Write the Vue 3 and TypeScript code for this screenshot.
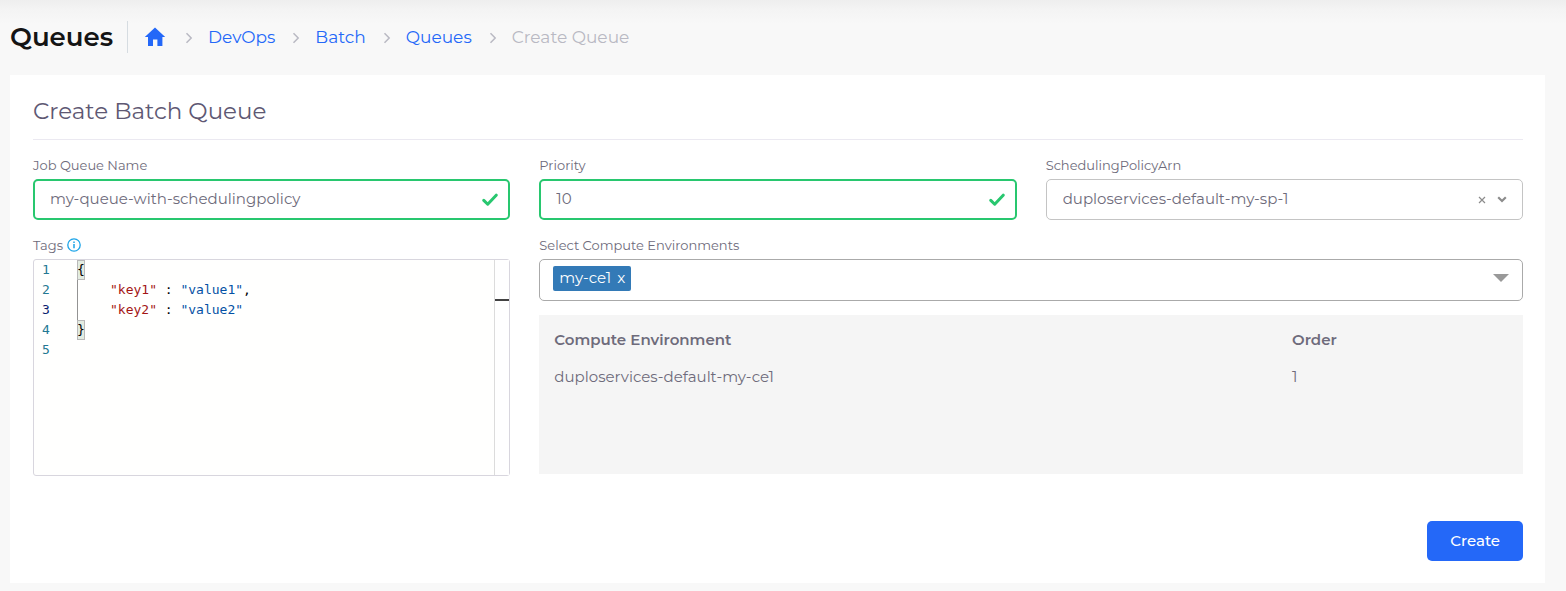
<script setup lang="ts">
import { computed, ref } from 'vue'

interface Crumb {
  label: string
  current?: boolean
}
interface Token {
  text: string
  kind: string
}
interface Environment {
  short: string
  name: string
}

const crumbs: Crumb[] = [
  { label: 'DevOps' },
  { label: 'Batch' },
  { label: 'Queues' },
  { label: 'Create Queue', current: true },
]

const queueName = ref('my-queue-with-schedulingpolicy')
const priority = ref('10')
const policy = ref('duploservices-default-my-sp-1')
const search = ref('')
const environments = ref<Environment[]>([{ short: 'my-ce1', name: 'duploservices-default-my-ce1' }])
const rows = computed(() => environments.value.map((env, i) => ({ name: env.name, order: i + 1 })))

const lines: Token[][] = [
  [{ text: '{', kind: 'brace' }],
  [
    { text: '"key1"', kind: 'key' },
    { text: ' : ', kind: 'plain' },
    { text: '"value1"', kind: 'value' },
    { text: ',', kind: 'plain' },
  ],
  [
    { text: '"key2"', kind: 'key' },
    { text: ' : ', kind: 'plain' },
    { text: '"value2"', kind: 'value' },
  ],
  [{ text: '}', kind: 'brace' }],
  [],
]
const activeLine = 3

function removeEnvironment(index: number) {
  environments.value.splice(index, 1)
}
</script>

<template>
  <div class="page">
    <header class="topbar">
      <h1>Queues</h1>
      <nav class="crumbs" aria-label="Breadcrumb">
        <a class="home" href="#" aria-label="Home">
          <svg width="22" height="20" viewBox="0 0 22 20"><path d="M11 0.500 21.200 10H18.400v9h-5v-6.500H9v6.500H4V10H0.800z" fill="currentColor" /></svg>
        </a>
        <template v-for="crumb in crumbs" :key="crumb.label">
          <svg class="sep" width="8" height="12" viewBox="0 0 8 12"><path d="M1.500 1.200 6.200 6 1.500 10.800" fill="none" stroke="currentColor" stroke-width="1.500" /></svg>
          <span v-if="crumb.current" class="current" aria-current="page">{{ crumb.label }}</span>
          <a v-else href="#">{{ crumb.label }}</a>
        </template>
      </nav>
    </header>

    <main class="card">
      <h2>Create Batch Queue</h2>
      <form class="form" @submit.prevent>
        <div class="field">
          <label for="queue-name">Job Queue Name</label>
          <div class="box valid">
            <input id="queue-name" v-model="queueName" type="text" />
            <svg class="check" width="16" height="14" viewBox="0 0 16 14"><path d="M1.800 7.400 5.700 11.200 14.200 2.200" fill="none" stroke="currentColor" stroke-width="3" stroke-linecap="round" stroke-linejoin="round" /></svg>
          </div>
        </div>

        <div class="field">
          <label for="priority">Priority</label>
          <div class="box valid">
            <input id="priority" v-model="priority" type="text" inputmode="numeric" />
            <svg class="check" width="16" height="14" viewBox="0 0 16 14"><path d="M1.800 7.400 5.700 11.200 14.200 2.200" fill="none" stroke="currentColor" stroke-width="3" stroke-linecap="round" stroke-linejoin="round" /></svg>
          </div>
        </div>

        <div class="field">
          <label for="policy">SchedulingPolicyArn</label>
          <div class="box select">
            <select id="policy" v-model="policy">
              <option>duploservices-default-my-sp-1</option>
            </select>
            <button class="clear" type="button" aria-label="Clear policy" @click="policy = ''">
              <svg width="8" height="8" viewBox="0 0 8 8"><path d="M1 1l6 6M7 1 1 7" stroke="currentColor" stroke-width="1.200" /></svg>
            </button>
            <svg class="chevron" width="10" height="7" viewBox="0 0 10 7"><path d="M1.200 1.200 5 5 8.800 1.200" fill="none" stroke="currentColor" stroke-width="2.200" /></svg>
          </div>
        </div>

        <div class="field">
          <span id="tags-label" class="label">
            Tags
            <svg width="14" height="14" viewBox="0 0 14 14"><circle cx="7" cy="7" r="6.200" fill="none" stroke="currentColor" stroke-width="1.300" /><path d="M7 6v4.300M7 3.400v1.500" stroke="currentColor" stroke-width="1.500" /></svg>
          </span>
          <div class="editor">
            <div class="gutter" aria-hidden="true">
              <span v-for="(_, i) in lines" :key="i" :class="{ active: i + 1 === activeLine }">{{ i + 1 }}</span>
            </div>
            <div class="code" contenteditable="true" spellcheck="false" role="textbox" aria-multiline="true" aria-labelledby="tags-label">
              <div v-for="(line, i) in lines" :key="i" class="line" :class="{ nested: line.length > 1 }"><span v-for="(token, j) in line" :key="j" :class="token.kind">{{ token.text }}</span></div>
            </div>
            <div class="ruler"><div class="cursor-mark"></div></div>
          </div>
        </div>

        <div class="field wide">
          <label for="environments">Select Compute Environments</label>
          <div class="box multi">
            <span v-for="(env, i) in environments" :key="env.name" class="chip">
              {{ env.short }}
              <button type="button" :aria-label="`Remove ${env.short}`" @click="removeEnvironment(i)">x</button>
            </span>
            <input id="environments" v-model="search" type="text" role="combobox" aria-expanded="false" />
            <svg class="arrow" width="16" height="8" viewBox="0 0 16 8"><path d="M0 0h16L8 8z" fill="currentColor" /></svg>
          </div>
          <div class="panel">
            <table>
              <thead>
                <tr><th scope="col">Compute Environment</th><th scope="col" class="order">Order</th></tr>
              </thead>
              <tbody>
                <tr v-for="row in rows" :key="row.name"><td>{{ row.name }}</td><td>{{ row.order }}</td></tr>
              </tbody>
            </table>
          </div>
        </div>

        <div class="actions">
          <button class="create" type="submit">Create</button>
        </div>
      </form>
    </main>
  </div>
</template>

<style>
body {
  margin: 0;
  background: #f8f8f8;
}
</style>

<style scoped>
.page {
  box-sizing: border-box;
  min-height: 100vh;
  padding: 0 21px 8px 10px;
  background: linear-gradient(#eee, #f4f4f4 10px, #f8f8f8 24px);
  color: #6e6b7b;
  font-family: Montserrat, Inter, sans-serif;
  font-size: 15px;
  line-height: 24px;
}
.topbar {
  display: flex;
  align-items: center;
  box-sizing: border-box;
  height: 75px;
  padding-bottom: 2px;
}
h1 {
  margin: 0;
  padding-right: 14px;
  border-right: 1px solid #d6dce1;
  color: #141414;
  font-size: 26px;
  font-weight: 600;
  line-height: 32px;
}
.crumbs {
  display: flex;
  align-items: center;
  padding-left: 16px;
  font-size: 17px;
}
.crumbs a {
  color: #2468f8;
  text-decoration: none;
}
.crumbs .home {
  display: flex;
  margin-right: 2px;
}
.sep {
  margin: 2px 15px 0 17px;
  color: #b9b9c3;
}
.current {
  color: #b9b9c3;
}
.card {
  padding: 20px 22px 22px 23px;
  background: #fff;
}
h2 {
  margin: 0;
  padding-bottom: 12px;
  border-bottom: 1px solid #ebe9f1;
  color: #5e5873;
  font-size: 23px;
  font-weight: 400;
  line-height: 32px;
}
.form {
  display: grid;
  grid-template-columns: repeat(3, minmax(0, 1fr));
  gap: 15px 29px;
  padding-top: 15px;
}
.wide {
  grid-column: span 2;
}
.field label,
.label {
  display: flex;
  align-items: center;
  gap: 4px;
  padding-bottom: 4px;
  font-size: 13px;
  line-height: 20px;
}
.label svg {
  color: #1ca4e8;
}
.box {
  display: flex;
  align-items: center;
  box-sizing: border-box;
  height: 41px;
  border: 1px solid #c4c4c4;
  border-radius: 5px;
  background: #fff;
}
.box.valid {
  border: 2px solid #28c76f;
}
.box input,
.box select {
  flex: 1;
  min-width: 0;
  height: 100%;
  box-sizing: border-box;
  padding: 0 15px 2px;
  border: 0;
  outline: 0;
  background: none;
  color: inherit;
  font: inherit;
  appearance: none;
}
.box select {
  padding: 0 16px 2px;
}
.check {
  margin-right: 10px;
  color: #28c76f;
}
button {
  border: 0;
  background: none;
  color: inherit;
  font: inherit;
  cursor: pointer;
}
.clear {
  display: flex;
  padding: 4px;
  color: #8c8c8c;
}
.chevron {
  margin: 0 15px 0 7px;
  color: #8c8c8c;
}
.editor {
  display: flex;
  box-sizing: border-box;
  height: 217px;
  border: 1px solid #d8d6de;
  border-radius: 3px;
  background: #fffffe;
  font-family: Consolas, "DejaVu Sans Mono", monospace;
  font-size: 13px;
  line-height: 20px;
}
.gutter {
  display: flex;
  flex-direction: column;
  width: 43px;
  padding-left: 8px;
  box-sizing: border-box;
  color: #237893;
}
.gutter .active {
  color: #0b216f;
}
.code {
  flex: 1;
  outline: 0;
  color: #000;
  white-space: pre;
}
.line {
  min-height: 20px;
}
.nested {
  padding-left: 32px;
  border-left: 1px solid #939393;
}
.brace {
  display: inline-block;
  box-sizing: border-box;
  height: 20px;
  background: #e3ece1;
  outline: 1px solid #b9b9b9;
  outline-offset: -1px;
}
.key {
  color: #a31515;
}
.value {
  color: #0451a5;
}
.ruler {
  width: 14px;
  padding-top: 39px;
  border-left: 1px solid #dcdcdc;
  background: #fff;
}
.cursor-mark {
  height: 2px;
  background: #424242;
}
.box.multi {
  height: 42px;
  border-color: #aaa;
}
.chip {
  display: flex;
  align-items: center;
  gap: 6px;
  height: 25px;
  margin: 0 0 4px 13px;
  padding: 0 6px;
  border-radius: 2px;
  background: #337ab7;
  color: #fff;
}
.chip button {
  padding: 0;
}
.arrow {
  margin: 0 13px 4px 0;
  color: #999;
}
.panel {
  box-sizing: border-box;
  min-height: 159px;
  margin-top: 14px;
  padding-top: 6px;
  background: #f5f5f5;
}
table {
  width: 100%;
  border-collapse: collapse;
  table-layout: fixed;
}
th,
td {
  height: 37px;
  padding: 0 0 0 15px;
  text-align: left;
}
th {
  font-weight: 600;
}
.order {
  width: 25%;
  box-sizing: border-box;
}
.actions {
  display: flex;
  grid-column: 1 / -1;
  justify-content: flex-end;
  padding-top: 30px;
}
.create {
  height: 40px;
  padding: 0 23px;
  border-radius: 5px;
  background: #2468f8;
  color: #fff;
  font-weight: 500;
}
</style>
